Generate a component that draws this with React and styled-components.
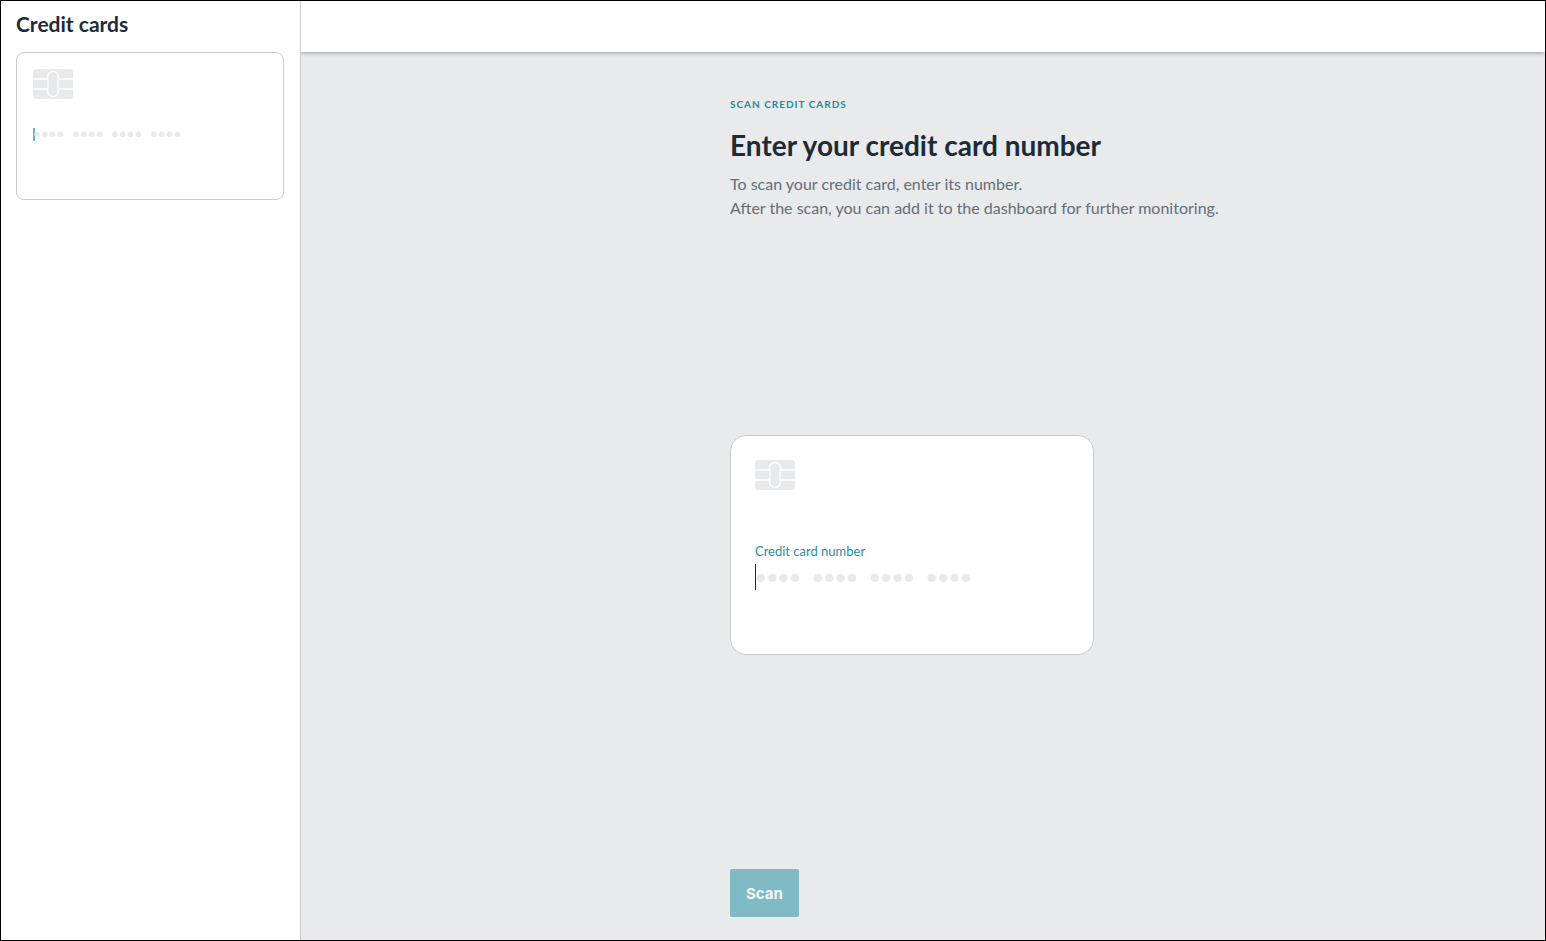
//App.jsx
///////////////////////////////
import React, { useState } from 'react';
import styled, { createGlobalStyle } from 'styled-components';

//////////////////////////////
//Styled components

const GlobalStyle = createGlobalStyle`
  * {
    box-sizing: border-box;
  }
  body {
    margin: 0;
    font-family: "Lato", "Liberation Sans", sans-serif;
    color: #1f2a37;
  }
`
const Page = styled.div`
  display: flex;
  min-height: 100vh;
  border: 1px solid #000;
  background: #e8eaeb;
`
const Sidebar = styled.aside`
  flex: 0 0 300px;
  padding: 7px 16px 16px 15px;
  border-right: 1px solid #c9cbcd;
  background: #fff;
`
const SidebarTitle = styled.h2`
  margin: 0 0 12px;
  font-size: 21px;
  line-height: 32px;
  font-weight: 700;
`
const Content = styled.div`
  flex: 1;
  display: flex;
  flex-direction: column;
  min-width: 0;
  overflow: hidden;
`
const TopBar = styled.header`
  height: 51px;
  background: #fff;
  box-shadow: 0 1px 4px rgba(31, 42, 55, 0.4);
`
const Column = styled.main`
  flex: 1;
  display: flex;
  flex-direction: column;
  align-items: flex-start;
  width: 386px;
  margin: 0 auto;
  padding: 44px 0 23px;
`
const Overline = styled.p`
  margin: 0;
  font-size: 10px;
  line-height: 16px;
  font-weight: 700;
  letter-spacing: 1px;
  text-transform: uppercase;
  color: #1f8a9c;
`
const Title = styled.h1`
  margin: 13px 0 7px;
  font-size: 28px;
  line-height: 40px;
  font-weight: 700;
  white-space: nowrap;
`
const Intro = styled.p`
  margin: 0;
  font-size: 16px;
  line-height: 24px;
  white-space: nowrap;
  color: #656e79;
`
const CardArea = styled.div`
  flex: 1;
  display: flex;
  align-items: center;
`
const Card = styled.div`
  display: flex;
  flex-direction: column;
  align-items: flex-start;
  width: ${props => props.$large ? '364px' : '100%'};
  height: ${props => props.$large ? '220px' : '148px'};
  padding: ${props => props.$large ? '24px' : '16px'};
  border: 1px solid #c9cbcd;
  border-radius: ${props => props.$large ? '16px' : '8px'};
  background: #fff;
`
const ChipIcon = styled.svg`
  display: block;
  flex: none;
  width: 40px;
  height: 30px;
`
const NumberLabel = styled.label`
  margin: 53px 0 5px;
  font-size: 13px;
  line-height: 16px;
  color: #2f8c9e;
`
const NumberInput = styled.input`
  width: 100%;
  height: 26px;
  padding: 2px 0 0;
  border: 0;
  outline: 0;
  background: none;
  box-shadow: inset 1px 0 #1f2a37;
  font-family: "Liberation Mono", "DejaVu Sans Mono", monospace;
  font-size: 19px;
  color: #1f2a37;

  &::placeholder {
    color: #e8e9eb;
    opacity: 1;
  }
`
const NumberPreview = styled.div`
  margin-top: 29px;
  height: 13px;
  box-shadow: inset 2px 0 #6aaee0;
  font-family: "Liberation Mono", "DejaVu Sans Mono", monospace;
  font-size: 13px;
  line-height: 14px;
  color: ${props => props.$filled ? '#1f2a37' : '#e8e9eb'};
`
const ScanButton = styled.button`
  height: 48px;
  padding: 0 16px;
  border: 0;
  border-radius: 2px;
  background: #80bac5;
  font-family: "Inter", "Liberation Sans", sans-serif;
  font-size: 15px;
  font-weight: 700;
  color: #f3f8f9;
`

const EMPTY_NUMBER = '●●●● ●●●● ●●●● ●●●●'

//Card chip
function Chip() {
  return (
    <ChipIcon viewBox="0 0 40 30" aria-hidden="true">
      <rect width="40" height="30" rx="3.5" fill="#e8e9eb" />
      <path d="M0 10h15M25 10h15M0 20h15M25 20h15" stroke="#fff" strokeWidth="1.500" />
      <path
        d="M20 2.500c-3 0-5.400 2.200-5.400 5 0 2.600.5 4.600.5 7.500s-.5 4.900-.5 7.500c0 2.800 2.400 5 5.400 5s5.400-2.200 5.400-5c0-2.600-.5-4.600-.5-7.500s.5-4.900.5-7.500c0-2.800-2.400-5-5.400-5z"
        fill="#e8e9eb"
        stroke="#fff"
        strokeWidth="1.300"
      />
    </ChipIcon>
  )
}

//////////////////////////////
/**
 * Credit card scan page
 */
function App() {
  const [number, setNumber] = useState('')

  return (
    <>
      <GlobalStyle />
      <Page>
        <Sidebar>
          <SidebarTitle>Credit cards</SidebarTitle>
          <Card>
            <Chip />
            <NumberPreview $filled={number !== ''}>{number || EMPTY_NUMBER}</NumberPreview>
          </Card>
        </Sidebar>
        <Content>
          <TopBar />
          <Column>
            <Overline>Scan credit cards</Overline>
            <Title>Enter your credit card number</Title>
            <Intro>
              To scan your credit card, enter its number.<br />
              After the scan, you can add it to the dashboard for further monitoring.
            </Intro>
            <CardArea>
              <Card $large>
                <Chip />
                <NumberLabel htmlFor="card-number">Credit card number</NumberLabel>
                <NumberInput
                  id="card-number"
                  inputMode="numeric"
                  maxLength={19}
                  placeholder={EMPTY_NUMBER}
                  value={number}
                  onChange={e => setNumber(e.target.value)}
                />
              </Card>
            </CardArea>
            <ScanButton type="button" disabled={number === ''}>Scan</ScanButton>
          </Column>
        </Content>
      </Page>
    </>
  )
}
export default App;
